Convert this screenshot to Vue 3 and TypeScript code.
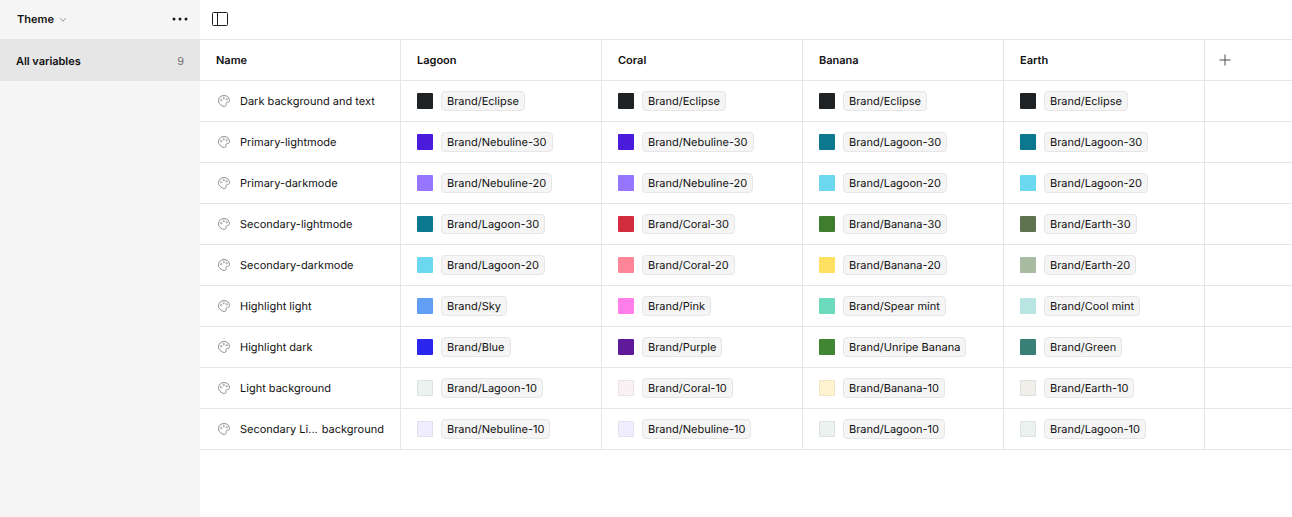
<script setup lang="ts">
interface Token {
  color: string
  label: string
  pale?: boolean
}
interface Row {
  name: string
  tail?: string
  values: Token[]
}

const modes: string[] = ['Lagoon', 'Coral', 'Banana', 'Earth']

const t = (color: string, label: string, pale = false): Token => ({ color, label: 'Brand/' + label, pale })

const eclipse = t('#1e2225', 'Eclipse')
const nebuline30 = t('#4a1bdb', 'Nebuline-30')
const nebuline20 = t('#9675ff', 'Nebuline-20')
const nebuline10 = t('#f0edff', 'Nebuline-10', true)
const lagoon30 = t('#0b7890', 'Lagoon-30')
const lagoon20 = t('#6bd8f0', 'Lagoon-20')
const lagoon10 = t('#ebf2ef', 'Lagoon-10', true)

const rows: Row[] = [
  { name: 'Dark background and text', values: [eclipse, eclipse, eclipse, eclipse] },
  { name: 'Primary-lightmode', values: [nebuline30, nebuline30, lagoon30, lagoon30] },
  { name: 'Primary-darkmode', values: [nebuline20, nebuline20, lagoon20, lagoon20] },
  {
    name: 'Secondary-lightmode',
    values: [lagoon30, t('#d12d3e', 'Coral-30'), t('#3f7d2f', 'Banana-30'), t('#5f7350', 'Earth-30')],
  },
  {
    name: 'Secondary-darkmode',
    values: [lagoon20, t('#ff8598', 'Coral-20'), t('#ffe060', 'Banana-20'), t('#a9bca1', 'Earth-20')],
  },
  {
    name: 'Highlight light',
    values: [t('#629ff4', 'Sky'), t('#ff7eea', 'Pink'), t('#6bdabd', 'Spear mint'), t('#b8e4e2', 'Cool mint')],
  },
  {
    name: 'Highlight dark',
    values: [t('#2a26ee', 'Blue'), t('#5e1a98', 'Purple'), t('#418633', 'Unripe Banana'), t('#398077', 'Green')],
  },
  {
    name: 'Light background',
    values: [lagoon10, t('#faf1f4', 'Coral-10', true), t('#fff4cf', 'Banana-10', true), t('#efeeeb', 'Earth-10', true)],
  },
  { name: 'Secondary Li...', tail: 'background', values: [nebuline10, nebuline10, lagoon10, lagoon10] },
]
</script>

<template>
  <div class="app">
    <aside class="sidebar">
      <div class="collection">
        <span class="title">Theme</span>
        <svg class="chevron" width="8" height="6" viewBox="0 0 8 6">
          <path d="M1 1.2 4 4.2 7 1.2" fill="none" stroke="#929292" />
        </svg>
        <svg class="more" width="16" height="4" viewBox="0 0 16 4" fill="#1a1a1a">
          <circle cx="2" cy="2" r="1.5" />
          <circle cx="8" cy="2" r="1.5" />
          <circle cx="14" cy="2" r="1.5" />
        </svg>
      </div>
      <div class="group">
        <span>All variables</span>
        <span class="count">{{ rows.length }}</span>
      </div>
    </aside>

    <main class="main">
      <div class="toolbar">
        <svg width="16" height="14" viewBox="0 0 16 14" fill="none" stroke="#1f1f1f">
          <rect x="0.5" y="0.5" width="15" height="13" rx="1" />
          <path d="M5.5 0.5v13" />
        </svg>
      </div>

      <div class="row head">
        <div class="cell name">Name</div>
        <div v-for="mode in modes" :key="mode" class="cell">{{ mode }}</div>
        <div class="cell add">
          <svg width="12" height="12" viewBox="0 0 12 12">
            <path d="M6 0.5v11M0.5 6h11" fill="none" stroke="#4d4d4d" />
          </svg>
        </div>
      </div>

      <div v-for="row in rows" :key="row.name" class="row">
        <div class="cell name">
          <svg class="palette" width="12" height="12" viewBox="0 0 12 12">
            <path
              d="M6 .5C2.900.500.500 2.900.500 5.800c0 1.900 1 3.200 2.500 4.300C4 11 5 11.500 6.200 11.500c1.300 0 1.900-.7 1.800-1.800-.2-1.500.300-2.200 1.600-2.300 1.300 0 1.900-.7 1.900-1.900C11.500 2.600 9.100.500 6 .500z"
              fill="none"
              stroke="#858585"
              stroke-width="0.9"
            />
            <g fill="none" stroke="#858585" stroke-width="0.7">
              <circle cx="3.200" cy="5.200" r="0.750" />
              <circle cx="5.700" cy="3" r="0.750" />
              <circle cx="8.700" cy="4.300" r="0.750" />
            </g>
          </svg>
          <span>{{ row.name }}</span>
          <span v-if="row.tail" class="tail">{{ row.tail }}</span>
        </div>
        <div v-for="(value, i) in row.values" :key="i" class="cell">
          <span class="swatch" :class="{ pale: value.pale }" :style="{ backgroundColor: value.color }"></span>
          <span class="chip">{{ value.label }}</span>
        </div>
        <div class="cell add"></div>
      </div>
    </main>
  </div>
</template>

<style>
body {
  margin: 0;
  background: #fff;
}
</style>

<style scoped>
.app {
  display: flex;
  height: 517px;
  overflow: hidden;
  font: 400 11px/16px Inter, sans-serif;
  text-rendering: geometricPrecision;
  color: #111;
  white-space: nowrap;
}
.sidebar {
  flex: 0 0 200px;
  background: #f5f5f5;
}
.collection {
  display: flex;
  align-items: center;
  box-sizing: border-box;
  height: 39px;
  padding: 0 12px 1px 17px;
  font-weight: 600;
}
.chevron {
  margin: 2px 0 0 5px;
}
.more {
  margin-left: auto;
}
.group {
  display: flex;
  align-items: center;
  justify-content: space-between;
  box-sizing: border-box;
  height: 42px;
  padding: 2px 16px 0;
  background: #e6e6e6;
  font-weight: 600;
  letter-spacing: -0.04px;
}
.count {
  font-weight: 400;
  color: #757575;
}
.main {
  flex: 1;
  min-width: 0;
}
.toolbar {
  display: flex;
  align-items: center;
  box-sizing: border-box;
  height: 40px;
  padding: 0 12px 1px;
  border-bottom: 1px solid #e6e6e6;
}
.row {
  display: grid;
  grid-template-columns: 200px repeat(4, 201px) 1fr;
  height: 40px;
  border-bottom: 1px solid #e6e6e6;
}
.cell {
  display: flex;
  align-items: center;
  padding-left: 16px;
  border-left: 1px solid #e6e6e6;
}
.cell.name {
  border-left: 0;
}
.head {
  font-weight: 600;
}
.cell.add {
  padding-left: 14px;
}
.palette {
  margin: 0 10px 0 2px;
}
.tail {
  margin-left: 4px;
}
.swatch {
  box-sizing: border-box;
  width: 16px;
  height: 16px;
  margin-right: 8px;
  border-radius: 1px;
}
.swatch.pale {
  border: 1px solid rgba(0, 0, 0, 0.06);
}
.chip {
  box-sizing: border-box;
  height: 20px;
  padding: 0 5px;
  border: 1px solid #e6e6e6;
  border-radius: 4px;
  background: #f5f5f5;
  line-height: 18px;
}
</style>
